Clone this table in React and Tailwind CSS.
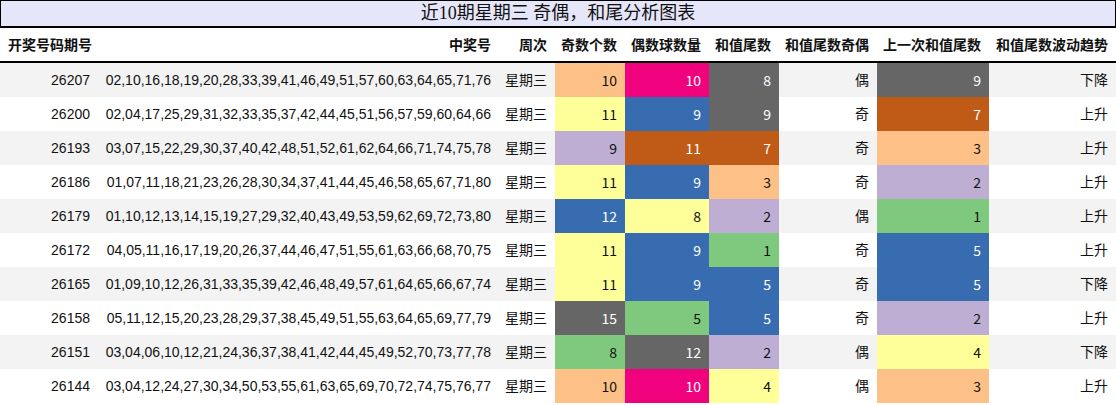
import React from "react";

const C = {
  O: "bg-[#fdc086] text-[#111]",
  Y: "bg-[#ffff99] text-[#111]",
  P: "bg-[#beaed4] text-[#111]",
  G: "bg-[#7fc97f] text-[#111]",
  B: "bg-[#386cb0] text-white",
  M: "bg-[#f0027f] text-white",
  R: "bg-[#bf5b17] text-white",
  K: "bg-[#666666] text-white",
};

const rows = [
  ["26207", "02,10,16,18,19,20,28,33,39,41,46,49,51,57,60,63,64,65,71,76", [10, "O"], [10, "M"], [8, "K"], "偶", [9, "K"], "下降"],
  ["26200", "02,04,17,25,29,31,32,33,35,37,42,44,45,51,56,57,59,60,64,66", [11, "Y"], [9, "B"], [9, "K"], "奇", [7, "R"], "上升"],
  ["26193", "03,07,15,22,29,30,37,40,42,48,51,52,61,62,64,66,71,74,75,78", [9, "P"], [11, "R"], [7, "R"], "奇", [3, "O"], "上升"],
  ["26186", "01,07,11,18,21,23,26,28,30,34,37,41,44,45,46,58,65,67,71,80", [11, "Y"], [9, "B"], [3, "O"], "奇", [2, "P"], "上升"],
  ["26179", "01,10,12,13,14,15,19,27,29,32,40,43,49,53,59,62,69,72,73,80", [12, "B"], [8, "Y"], [2, "P"], "偶", [1, "G"], "上升"],
  ["26172", "04,05,11,16,17,19,20,26,37,44,46,47,51,55,61,63,66,68,70,75", [11, "Y"], [9, "B"], [1, "G"], "奇", [5, "B"], "上升"],
  ["26165", "01,09,10,12,26,31,33,35,39,42,46,48,49,57,61,64,65,66,67,74", [11, "Y"], [9, "B"], [5, "B"], "奇", [5, "B"], "下降"],
  ["26158", "05,11,12,15,20,23,28,29,37,38,45,49,51,55,63,64,65,69,77,79", [15, "K"], [5, "G"], [5, "B"], "奇", [2, "P"], "上升"],
  ["26151", "03,04,06,10,12,21,24,36,37,38,41,42,44,45,49,52,70,73,77,78", [8, "G"], [12, "K"], [2, "P"], "偶", [4, "Y"], "下降"],
  ["26144", "03,04,12,24,27,30,34,50,53,55,61,63,65,69,70,72,74,75,76,77", [10, "O"], [10, "M"], [4, "Y"], "偶", [3, "O"], "上升"],
];

const heads = ["中奖号", "周次", "奇数个数", "偶数球数量", "和值尾数", "和值尾数奇偶", "上一次和值尾数", "和值尾数波动趋势"];

const grid = "grid grid-cols-[98px_401px_56px_70px_84px_70px_98px_112px_127px]";

const Swatch = ({ cell }) => (
  <div className={`${C[cell[1]]} flex items-center justify-end px-2 font-['Noto_Sans_CJK_SC',sans-serif]`}>
    {cell[0]}
  </div>
);

export default function App() {
  return (
    <div className="w-[1116px] h-[405px] bg-white whitespace-nowrap text-[14px] text-[#111] font-['Liberation_Sans','Noto_Sans_CJK_SC',sans-serif]">
      <div className="h-[28px] bg-[#e6e6fa] border border-black border-b-2 flex items-center justify-center text-[18px] font-['Liberation_Serif','Noto_Sans_CJK_SC',serif]">
        近10期星期三 奇偶，和尾分析图表
      </div>
      <div className={`${grid} h-[35px] border-b-2 border-black font-bold font-['Noto_Sans_CJK_SC',sans-serif]`}>
        <div className="flex items-center pl-2">开奖号码期号</div>
        {heads.map((h) => (
          <div key={h} className="flex items-center justify-end px-2">{h}</div>
        ))}
      </div>
      {rows.map((r, i) => (
        <div key={r[0]} className={`${grid} h-[34px] ${i % 2 === 0 ? "bg-[#f3f3f3]" : "bg-white"}`}>
          <div className="flex items-center justify-end px-2">{r[0]}</div>
          <div className="flex items-center justify-end px-2">{r[1]}</div>
          <div className="flex items-center justify-end pr-2">星期三</div>
          <Swatch cell={r[2]} />
          <Swatch cell={r[3]} />
          <Swatch cell={r[4]} />
          <div className="flex items-center justify-end px-2">{r[5]}</div>
          <Swatch cell={r[6]} />
          <div className="flex items-center justify-end px-2">{r[7]}</div>
        </div>
      ))}
    </div>
  );
}
